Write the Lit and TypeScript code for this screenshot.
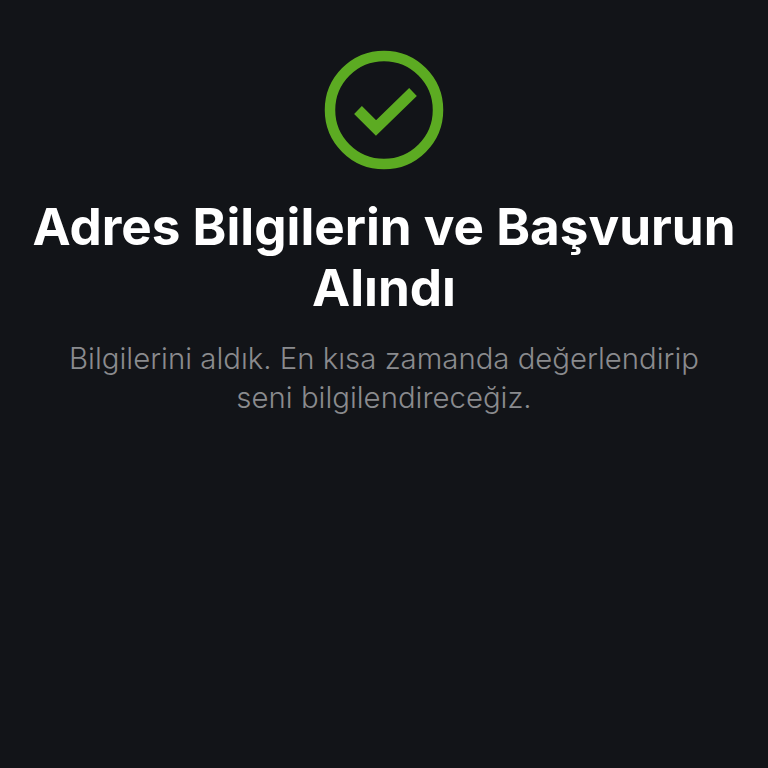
import { LitElement, html, css } from "lit";
import { customElement } from "lit/decorators.js";

@customElement("app-root")
export class AppRoot extends LitElement {
  static styles = css`
    :host { display: block; width: 768px; height: 768px; background: #121418; overflow: hidden; }
    .wrap { display: flex; flex-direction: column; align-items: center; padding-top: 50px; font-family: Inter, "Noto Sans", sans-serif; text-align: center; }
    svg { display: block; width: 120px; height: 120px; }
    h1 { margin: 26px 0 0; font-size: 51.2px; line-height: 61px; font-weight: 700; color: #fff; white-space: nowrap; }
    p { margin: 21px 0 0; font-size: 29.35px; line-height: 39px; font-weight: 300; color: #8a8b8e; white-space: nowrap; }
  `;
  render() {
    return html`<div class="wrap">
      <svg viewBox="0 0 120 120" fill="none">
        <circle cx="60" cy="60" r="54" stroke="#5cab22" stroke-width="10.5"/>
        <path d="M34 60 L52 78 L89 42" stroke="#5cab22" stroke-width="11"/>
      </svg>
      <h1>Adres Bilgilerin ve Başvurun<br>Alındı</h1>
      <p>Bilgilerini aldık. En kısa zamanda değerlendirip<br>seni bilgilendireceğiz.</p>
    </div>`;
  }
}
